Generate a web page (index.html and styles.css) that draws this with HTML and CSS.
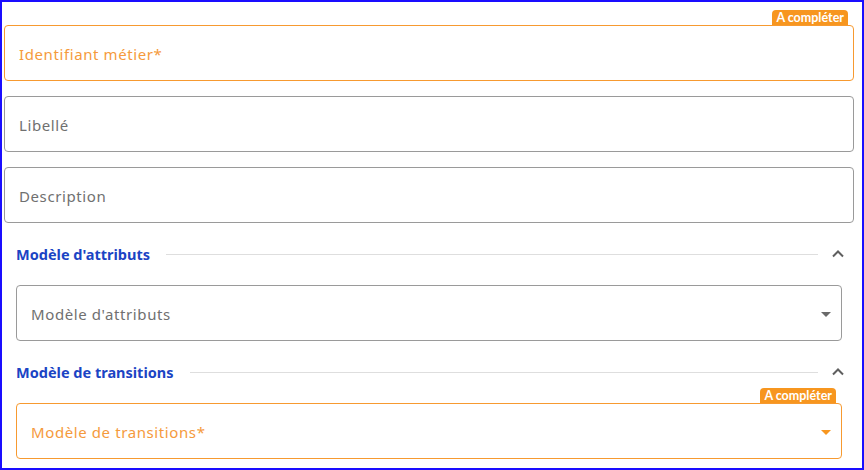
FILE: index.html
```html
<!DOCTYPE html>
<html lang="fr">
<head>
    <meta charset="UTF-8">
    <meta name="viewport" content="width=device-width, initial-scale=1.0">
    <title>Formulaire</title>
    <link rel="stylesheet" href="styles.css">
</head>
<body>
    <div class="frame">
        <div class="group">
            <div class="badge-row"><span class="badge">A compléter</span></div>
            <div class="field required">Identifiant métier*</div>
        </div>
        <div class="field">Libellé</div>
        <div class="field">Description</div>

        <div class="section">
            <div class="section-header">
                <span class="section-title">Modèle d'attributs</span>
                <span class="section-line"></span>
                <svg class="chevron" width="24" height="24" viewBox="0 0 24 24">
                    <polyline points="7,14.5 12,9.5 17,14.5" fill="none" stroke="#5f5f5f" stroke-width="2"/>
                </svg>
            </div>
            <div class="field select">
                <span>Modèle d'attributs</span>
                <span class="caret"></span>
            </div>

            <div class="section-header">
                <span class="section-title">Modèle de transitions</span>
                <span class="section-line"></span>
                <svg class="chevron" width="24" height="24" viewBox="0 0 24 24">
                    <polyline points="7,14.5 12,9.5 17,14.5" fill="none" stroke="#5f5f5f" stroke-width="2"/>
                </svg>
            </div>
            <div class="group">
                <div class="badge-row"><span class="badge">A compléter</span></div>
                <div class="field select required">
                    <span>Modèle de transitions*</span>
                    <span class="caret"></span>
                </div>
            </div>
        </div>
    </div>
</body>
</html>
```

FILE: styles.css
```css
html, body {
    margin: 0;
    padding: 0;
}
body {
    font-family: "Noto Sans", sans-serif;
    background: #fff;
}
.frame {
    width: 864px;
    height: 470px;
    box-sizing: border-box;
    border: 2px solid #1a0dff;
    padding: 8px 8px 0 2px;
}
.badge-row {
    display: flex;
    justify-content: flex-end;
    padding-right: 6px;
}
.badge {
    background: #f7961f;
    color: #fff;
    font-family: Lato, sans-serif;
    font-weight: bold;
    font-size: 12.5px;
    line-height: 15px;
    height: 15px;
    padding: 0 4px;
    border-radius: 4px 4px 0 0;
}
.field {
    height: 56px;
    box-sizing: border-box;
    border: 1px solid #9a9a9a;
    border-radius: 4px;
    padding: 2px 0 0 14px;
    display: flex;
    align-items: center;
    font-size: 15px;
    letter-spacing: 0.6px;
    color: #707070;
    margin-bottom: 15px;
}
.field.required {
    border-color: #f79a30;
    color: #f59a3c;
}
.section {
    padding-left: 12px;
}
.section-header {
    display: flex;
    align-items: center;
    height: 30px;
    margin-top: 16px;
    margin-right: 4px;
}
.section .field + .section-header {
    margin-top: 0;
}
.section-title {
    color: #1b44c4;
    font-weight: bold;
    font-size: 14.5px;
}
.section-line {
    flex: 1;
    height: 1px;
    background: #dedede;
    margin: 0 8px 0 16px;
}
.chevron {
    flex: none;
}
.section .field {
    margin-right: 12px;
    margin-top: 16px;
    margin-bottom: 16px;
    padding-right: 10px;
    justify-content: space-between;
}
.section .group {
    margin-top: 1px;
}
.section .group .badge-row {
    margin-right: 12px;
}
.section .group .field {
    margin-top: 0;
}
.caret {
    width: 0;
    height: 0;
    border-left: 5px solid transparent;
    border-right: 5px solid transparent;
    border-top: 5px solid #6a6a6a;
}
.required .caret {
    border-top-color: #f7961f;
}
```
